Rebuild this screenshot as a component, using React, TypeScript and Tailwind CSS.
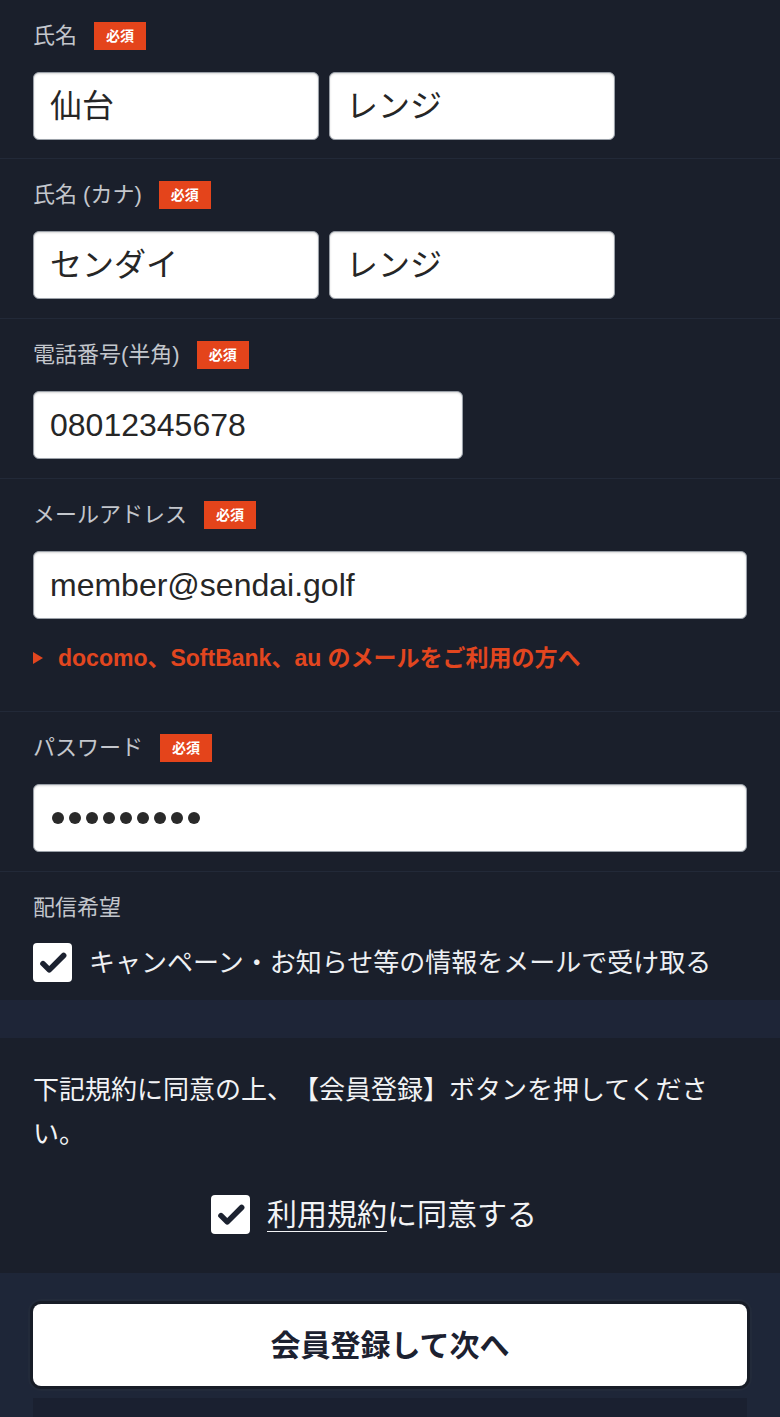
import { ReactNode } from 'react'

const jp = "font-['Liberation_Sans','Noto_Sans_CJK_JP',sans-serif]"

function Badge() {
  return (
    <span className="ml-[17px] inline-flex h-[28px] items-center bg-[#e4441b] px-[12px] text-[14px] font-bold text-white">
      必須
    </span>
  )
}

function Label({ text, required = true }: { text: string; required?: boolean }) {
  return (
    <div className="flex h-7 items-center">
      <span className="text-[22px] leading-none text-[#c3c6cc]">{text}</span>
      {required && <Badge />}
    </div>
  )
}

function Field({ value, className = '' }: { value: ReactNode; className?: string }) {
  return (
    <div
      className={`flex h-[68px] items-center rounded-[6px] border border-[#9aa0a8] bg-white px-4 text-[32px] leading-none text-[#262626] shadow-[inset_0_1px_2px_rgba(0,0,0,0.15)] ${className}`}
    >
      {value}
    </div>
  )
}

function Check() {
  return (
    <span className="flex h-[39px] w-[39px] shrink-0 items-center justify-center rounded-[4px] bg-white">
      <svg viewBox="0 0 24 24" className="h-[30px] w-[30px]" fill="none">
        <path d="M4 12.5l5 5L20.5 6" stroke="#1c2230" strokeWidth="4.5" strokeLinecap="round" strokeLinejoin="round" />
      </svg>
    </span>
  )
}

function Section({ children, className = '' }: { children: ReactNode; className?: string }) {
  return <section className={`border-b border-[#222938] px-[33px] pt-[22px] ${className}`}>{children}</section>
}

export default function App() {
  return (
    <div className={`min-h-[1417px] w-[780px] bg-[#1a1f2b] ${jp}`}>
      {/* Name */}
      <Section className="pt-6 pb-[18px]">
        <Label text="氏名" />
        <div className="mt-[22px] flex gap-[10px]">
          <Field value="仙台" className="w-[286px]" />
          <Field value="レンジ" className="w-[286px]" />
        </div>
      </Section>

      <Section className="pb-[19px]">
        <Label text="氏名 (カナ)" />
        <div className="mt-[22px] flex gap-[10px]">
          <Field value="センダイ" className="w-[286px]" />
          <Field value="レンジ" className="w-[286px]" />
        </div>
      </Section>

      <Section className="pb-[19px]">
        <Label text="電話番号(半角)" />
        <Field value="08012345678" className="mt-[22px] w-[430px]" />
      </Section>

      <Section className="pb-[42px]">
        <Label text="メールアドレス" />
        <Field value="member@sendai.golf" className="mt-[22px]" />
        <div className="mt-[28px] flex items-center text-[23px] font-bold leading-[22px] text-[#e2461f]">
          <svg viewBox="0 0 10 12" className="mr-[15px] h-[12px] w-[10px]">
            <path d="M0 0L10 6L0 12Z" fill="#e2461f" />
          </svg>
          docomo、SoftBank、au のメールをご利用の方へ
        </div>
      </Section>

      <Section className="pb-[19px]">
        <Label text="パスワード" />
        <Field
          className="mt-[22px]"
          value={
            <span className="flex gap-[5px] pl-[2px]">
              {Array.from({ length: 9 }).map((_, i) => (
                <span key={i} className="h-[12px] w-[12px] rounded-full bg-[#2a2a2a]" />
              ))}
            </span>
          }
        />
      </Section>

      <section className="px-[33px] pt-[22px] pb-[18px]">
        <Label text="配信希望" required={false} />
        <label className="mt-[21px] flex items-center gap-[17px]">
          <Check />
          <span className="text-[26px] leading-none text-[#eef0f3]">キャンペーン・お知らせ等の情報をメールで受け取る</span>
        </label>
      </section>

      <div className="h-[38px] bg-[#1e2537]" />

      {/* Terms */}
      <section className="px-[33px] pt-[30px] pb-[39px]">
        <p className="max-w-[700px] text-[26px] leading-[44px] text-[#f2f3f5] [text-spacing-trim:space-all]">
          下記規約に同意の上、【会員登録】ボタンを押してください。
        </p>
        <div className="mt-[39px] flex items-center justify-center pr-[32px]">
          <label className="flex items-center gap-[17px]">
            <Check />
            <span className="text-[30px] leading-none text-[#f2f3f5]">
              <span className="underline decoration-1 underline-offset-[6px]">利用規約</span>に同意する
            </span>
          </label>
        </div>
      </section>

      <section className="bg-[#1e2638] px-[33px] pt-[31px] pb-[1px]">
        <button className="flex h-[82px] w-full items-center justify-center rounded-[8px] bg-white text-[30px] font-bold text-[#1c2130] shadow-[0_0_0_3px_#171c27,0_0_0_5px_#222a3a]">
          会員登録して次へ
        </button>
        <div className="mt-[12px] h-[40px] bg-[#1a2030]" />
      </section>
    </div>
  )
}
